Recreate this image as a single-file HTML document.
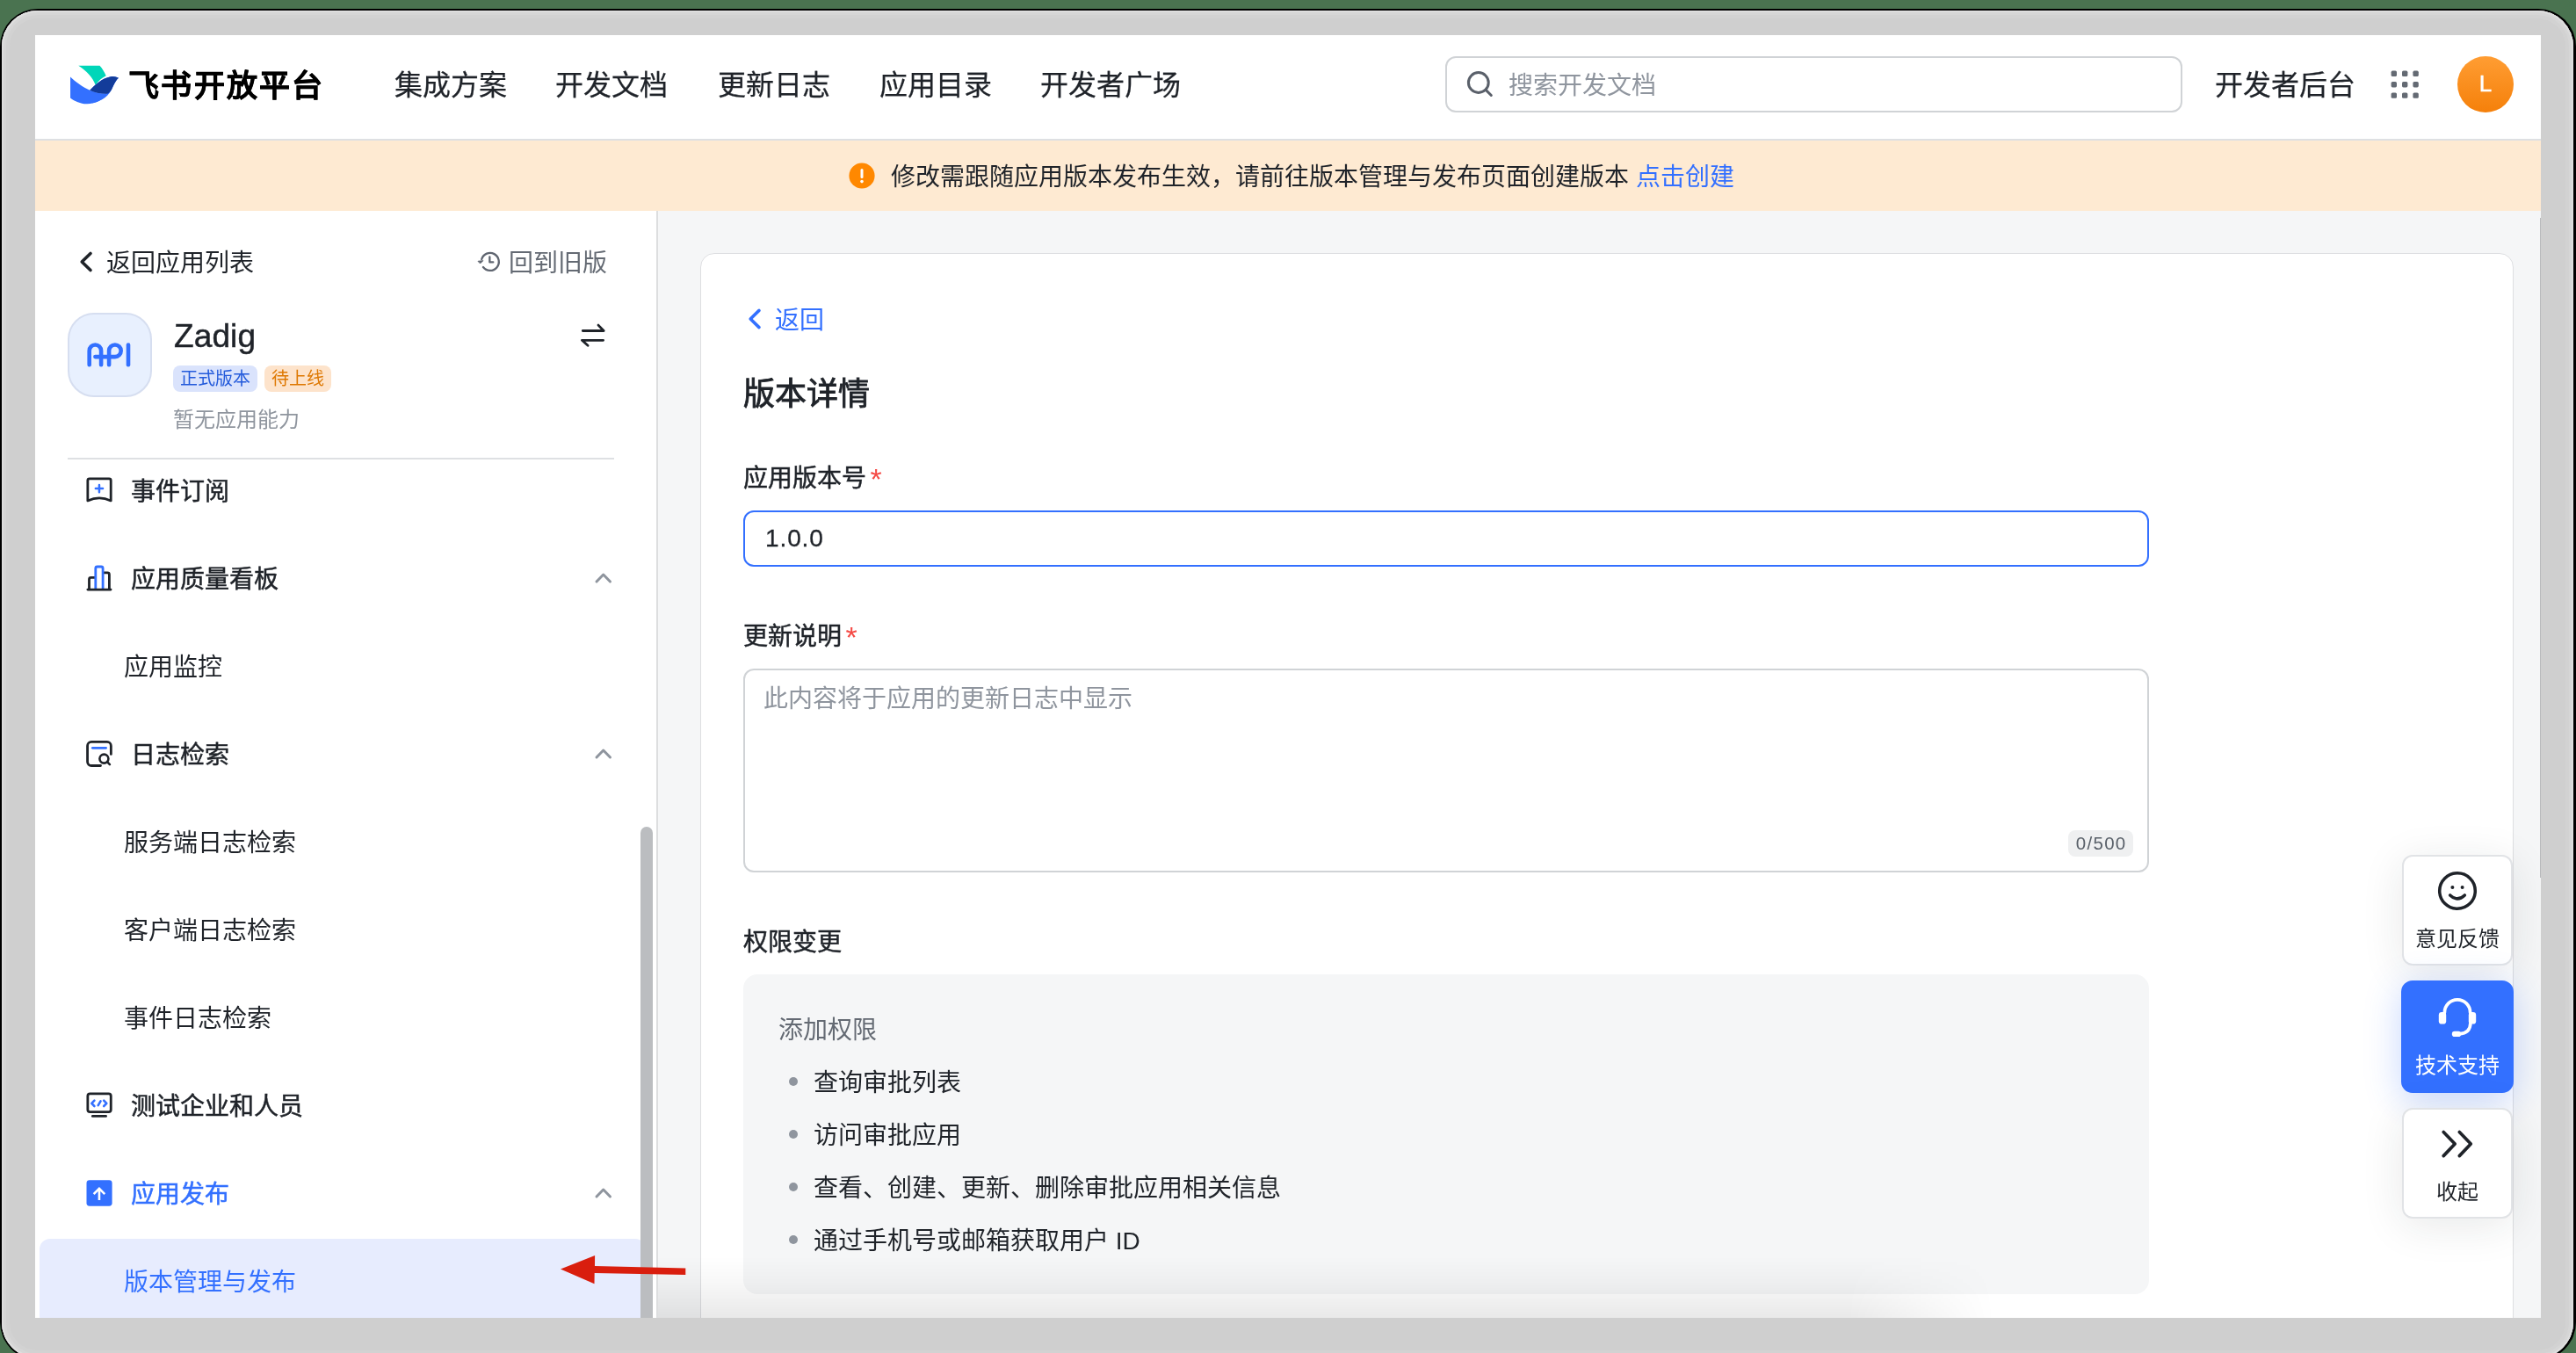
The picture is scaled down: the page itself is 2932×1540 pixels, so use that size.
<!DOCTYPE html>
<html lang="zh-CN">
<head>
<meta charset="utf-8">
<title>飞书开放平台 - 版本详情</title>
<style>
html,body{margin:0;padding:0}
body{width:2932px;height:1540px;overflow:hidden;background:#4a7350;font-family:"Liberation Sans",sans-serif;color:#1f2329;position:relative}
*{box-sizing:border-box}
.abs{position:absolute}
.t{position:absolute;white-space:nowrap;line-height:40px;height:40px;font-size:28px;color:#1f2329;text-align:justify;text-align-last:justify}
.m{-webkit-text-stroke:.5px currentColor}
svg{position:absolute;overflow:visible}

/* window frame */
.frame-edge{position:absolute;left:0;top:10px;width:2932px;height:1538px;border-radius:43px;background:#000}
.frame{position:absolute;left:1.5px;top:12px;width:2927px;height:1534px;border-radius:41px;background:#cfcfcf;box-shadow:inset 0 0 0 2px #dedede,inset 0 0 0 5px #d6d6d6,inset 0 0 0 9px #d2d2d2}
.app{position:absolute;left:40px;top:40px;width:2852px;height:1460px;overflow:hidden;background:#f5f6f7}
.page{position:absolute;left:-40px;top:-40px;width:2932px;height:1540px;will-change:transform}

/* header */
.header{position:absolute;left:40px;top:40px;width:2852px;height:120px;background:#fff;border-bottom:2px solid #dee0e3}
.logo-text{font-size:35px;font-weight:700;-webkit-text-stroke:.5px #000;color:#000;letter-spacing:2.3px;left:146px;top:78px}
.nav{font-size:32px;top:77px;-webkit-text-stroke:.25px currentColor}
.search{position:absolute;left:1645px;top:64px;width:839px;height:64px;border:2px solid #d0d3d6;border-radius:12px;background:#fff}
.avatar{position:absolute;left:2797px;top:64px;width:64px;height:64px;border-radius:50%;background:linear-gradient(180deg,#ff9d33 0%,#f5800a 100%);color:#fff;font-size:26px;line-height:62px;text-align:center;-webkit-text-stroke:.4px #fff}

/* banner */
.banner{position:absolute;left:40px;top:160px;width:2852px;height:80px;background:#feead2}

/* sidebar */
.sidebar{position:absolute;left:40px;top:240px;width:709px;height:1260px;background:#fff;border-right:2px solid #dddedf}
.gray{color:#646a73}
.blue{color:#3370ff}
.tag{position:absolute;height:30px;border-radius:8px;font-size:20px;line-height:30px;padding:0 8px;text-align:justify;text-align-last:justify;white-space:nowrap}
.sel{position:absolute;left:45px;top:1410px;width:690px;height:100px;border-radius:12px;background:#e7ecfe}
.scroll{position:absolute;left:729px;top:941px;width:14px;height:600px;border-radius:7px;background:#bbbdc0}

/* main card */
.card{position:absolute;left:797px;top:288px;width:2064px;height:1300px;background:#fff;border:1.5px solid #dddee1;border-radius:16px}
.input{position:absolute;left:846px;top:581px;width:1600px;height:64px;border:2px solid #3370ff;border-radius:12px;background:#fff}
.textarea{position:absolute;left:846px;top:761px;width:1600px;height:232px;border:2px solid #d0d3d6;border-radius:12px;background:#fff}
.count{position:absolute;left:2354px;top:945px;width:74px;height:30px;border-radius:8px;background:#eff0f1;color:#596069;font-size:20.5px;line-height:30px;text-align:center;letter-spacing:1.3px;padding-left:1.3px}
.perm{position:absolute;left:846px;top:1109px;width:1600px;height:364px;border-radius:16px;background:#f5f6f7}
.dot{position:absolute;left:898px;width:10px;height:10px;border-radius:50%;background:#8f959e}
.fade{position:absolute;left:749px;top:1430px;width:1521px;height:70px;background:linear-gradient(180deg,rgba(0,0,0,0) 0%,rgba(0,0,0,.03) 45%,rgba(0,0,0,.085) 100%);-webkit-mask-image:linear-gradient(90deg,#000 0%,#000 89%,transparent 100%);mask-image:linear-gradient(90deg,#000 0%,#000 89%,transparent 100%)}

/* floating help */
.fbtn{position:absolute;left:2734px;width:126px;height:126px;border-radius:12px;background:#fff;border:2px solid #e1e3e6;box-shadow:0 8px 48px rgba(31,35,41,.10)}
.fbtn.pri{left:2733px;width:128px;height:128px;border-radius:13px;background:#3370ff;border-color:#3370ff;box-shadow:0 8px 40px rgba(51,112,255,.28)}
.ft{position:absolute;width:128px;padding:0 16px;text-align:justify;text-align-last:justify;font-size:24px;line-height:32px;white-space:nowrap;color:#1f2329}
.pscroll{position:absolute;left:2891px;top:248px;width:1px;height:751px;background:#b9babc}
</style>
</head>
<body>
<div class="frame-edge"></div>
<div class="frame"></div>
<div class="app"><div class="page">

<!-- HEADER -->
<header class="header"></header>

<svg style="left:79px;top:74px" width="57" height="45" viewBox="79 74 57 45">
  <path d="M89.3,74.7 L113.5,74.7 C116.5,78 119,82 120.7,86.3 C116,88.5 112,92 108.8,96.9 C105.5,88 98.5,80.5 89.3,74.7 Z" fill="#00d6b9"/>
  <path d="M80.06,87.62 C86.4,93.56 94.32,99.5 102.24,102.8 C108.84,105.44 115.44,107.02 122.04,106.76 C118.08,113.36 107.52,118.64 98.28,118.24 C91.68,117.98 85.08,115.34 80.06,111.38 Z" fill="#3370ff"/>
  <path d="M102.24,102.8 C108,97 116,89 126,87.35 C129,86.8 132,87.2 135,88.67 C131,92 129,98 127,102 C122,112 112,116 104,117.6 C112,114 117,110 122,106.76 C115,107 108,105.4 102.24,102.8 Z" fill="#3370ff"/>
  <path d="M102.24,102.8 C108,97 116,89 126,87.35 C129,86.8 132,87.2 135,88.67 C131,92 129,98 127,102 C125.5,104.5 124,106 122,106.76 C115,107 108,105.4 102.24,102.8 Z" fill="#133c9a"/>
</svg>
<div class="t logo-text" style="width:223.81px">飞书开放平台</div>
<nav>
  <div class="t nav" style="width:128px;left:449px">集成方案</div>
  <div class="t nav" style="width:128px;left:632px">开发文档</div>
  <div class="t nav" style="width:128px;left:817px">更新日志</div>
  <div class="t nav" style="width:128px;left:1001px">应用目录</div>
  <div class="t nav" style="width:160px;left:1184px">开发者广场</div>
</nav>
<div class="search"></div>
<svg style="left:1668px;top:79px" width="32" height="32" viewBox="1668 79 32 32" fill="none" stroke="#5a606a" stroke-width="3" stroke-linecap="round">
  <circle cx="1682.8" cy="94" r="11.4"/><path d="M1691.2,102.4 L1697.3,108.5"/>
</svg>
<div class="t" style="width:168px;left:1717px;top:78px;color:#8f959e">搜索开发文档</div>
<div class="t nav m" style="width:160px;left:2521px">开发者后台</div>
<svg style="left:2721px;top:80px" width="32" height="32" viewBox="0 0 32 32" fill="#646a73">
  <rect x="0.6" y="0.6" width="6.4" height="6.4" rx="1.6"/><rect x="13" y="0.6" width="6.4" height="6.4" rx="1.6"/><rect x="25.4" y="0.6" width="6.4" height="6.4" rx="1.6"/>
  <rect x="0.6" y="13" width="6.4" height="6.4" rx="1.6"/><rect x="13" y="13" width="6.4" height="6.4" rx="1.6"/><rect x="25.4" y="13" width="6.4" height="6.4" rx="1.6"/>
  <rect x="0.6" y="25.4" width="6.4" height="6.4" rx="1.6"/><rect x="13" y="25.4" width="6.4" height="6.4" rx="1.6"/><rect x="25.4" y="25.4" width="6.4" height="6.4" rx="1.6"/>
</svg>
<div class="avatar">L</div>


<!-- BANNER -->
<div class="banner"></div>

<svg style="left:966px;top:185px" width="30" height="30" viewBox="0 0 30 30">
  <circle cx="15" cy="15" r="14.6" fill="#ff8800"/>
  <rect x="13.5" y="7" width="3" height="11" rx="1.5" fill="#fff"/><circle cx="15" cy="21.6" r="1.8" fill="#fff"/>
</svg>
<div class="t" style="width:959.78px;left:1014px;top:182px">修改需跟随应用版本发布生效，请前往版本管理与发布页面创建版本 <span class="blue">点击创建</span></div>


<!-- SIDEBAR -->
<aside class="sidebar"></aside>

<svg style="left:88px;top:284px" width="20" height="28" viewBox="88 284 20 28" fill="none" stroke="#1f2329" stroke-width="3.6" stroke-linecap="round" stroke-linejoin="round"><path d="M103,288.5 L93.2,298 L103,307.5"/></svg>
<div class="t" style="width:168px;left:121px;top:280px">返回应用列表</div>
<svg style="left:542px;top:284px" width="30" height="28" viewBox="542 284 30 28" fill="none" stroke="#5f6570" stroke-width="2.3" stroke-linecap="round" stroke-linejoin="round">
  <path d="M548.24,294.98 A10,10 0 1 1 549.92,304.06"/><path d="M544.4,297.3 L549.8,296.7 L546.8,299.7 Z" fill="#5f6570" stroke-width="1"/><path d="M557.35,292.4 V298.4 H561.3" stroke-width="2.3"/>
</svg>
<div class="t gray" style="width:112px;left:579px;top:280px">回到旧版</div>

<div class="abs" style="left:77px;top:356px;width:96px;height:96px;border-radius:30px;background:#e8f0fe;border:2px solid #d6def0"></div>
<svg style="left:96px;top:386px" width="56" height="36" viewBox="96 386 56 36" fill="none" stroke="#3370ff" stroke-width="4.6" stroke-linecap="round" stroke-linejoin="round">
  <path d="M101.7,415.2 V399.2 a6.7,6.7 0 0 1 13.4,0 V415.2"/>
  <path d="M124.1,415.2 V399.3 a6.8,6.8 0 1 1 6.8,6.8 H108.4"/>
  <path d="M146,392.5 V415.2"/>
</svg>
<div class="t" style="left:198px;top:359px;font-size:37px;line-height:48px;height:48px;letter-spacing:.1px;-webkit-text-stroke:.5px #1f2329">Zadig</div>
<svg style="left:658px;top:367px" width="34" height="32" viewBox="658 367 34 32" fill="none" stroke="#1f2329" stroke-width="2.8" stroke-linecap="round" stroke-linejoin="round">
  <path d="M663.3,376.5 H687.2 L681,370.1"/><path d="M686.6,387.3 H662.4 L669.1,393.3"/>
</svg>
<div class="tag" style="left:197px;top:416px;width:96px;background:#dae3fc;color:#245bdb">正式版本</div>
<div class="tag" style="left:301px;top:416px;width:76px;background:#fde3cb;color:#de7802">待上线</div>
<div class="t" style="width:144px;left:197px;top:458px;font-size:24px;color:#8f959e">暂无应用能力</div>
<div class="abs" style="left:77px;top:521px;width:622px;height:2px;background:#dee0e3"></div>

<!-- menu -->
<svg style="left:96px;top:541px" width="34" height="34" viewBox="96 541 34 34" fill="none" stroke="#1f2329" stroke-width="2.8" stroke-linejoin="round" stroke-linecap="round">
  <path d="M99.85,569.9 V546.85 a2,2 0 0 1 2,-2 H124.2 a2,2 0 0 1 2,2 V569.9 Q113,563.9 99.85,569.9 Z"/>
  <path d="M108.85,556.1 H117.05 M112.95,552 V560.2" stroke="#3370ff" stroke-width="2.5"/>
</svg>
<div class="t m" style="width:112px;left:149px;top:540px">事件订阅</div>

<svg style="left:96px;top:641px" width="34" height="34" viewBox="96 641 34 34" fill="none" stroke="#1f2329" stroke-width="2.8" stroke-linejoin="round" stroke-linecap="round">
  <path d="M101.5,670 V659.45 a2,2 0 0 1 2,-2 H108"/>
  <path d="M118,651.96 H122.4 a2,2 0 0 1 2,2 V670"/>
  <path d="M108.8,670 V647 a2,2 0 0 1 2,-2 h4.3 a2,2 0 0 1 2,2 V670" stroke="#3370ff"/>
  <path d="M99.85,671.1 H126.05"/>
</svg>
<div class="t m" style="width:168px;left:149px;top:640px">应用质量看板</div>
<svg style="left:676px;top:650px" width="22" height="16" viewBox="0 0 22 16" fill="none" stroke="#8f959e" stroke-width="3" stroke-linecap="round" stroke-linejoin="round"><path d="M3,12 L10.75,4 L18.5,12"/></svg>
<div class="t" style="width:112px;left:141px;top:740px">应用监控</div>

<svg style="left:96px;top:841px" width="34" height="34" viewBox="96 841 34 34" fill="none" stroke="#1f2329" stroke-width="2.8" stroke-linejoin="round" stroke-linecap="round">
  <path d="M114.5,871.5 H104.05 a4.5,4.5 0 0 1 -4.5,-4.5 V848.9 a4.5,4.5 0 0 1 4.5,-4.5 H121.85 a4.5,4.5 0 0 1 4.5,4.5 V858.4"/>
  <path d="M105.3,851.3 H120.6" stroke="#3370ff" stroke-width="2.7"/>
  <circle cx="118.4" cy="863.6" r="5" stroke-width="2.6"/><path d="M122,867.2 L124.9,870.1" stroke-width="2.6"/>
</svg>
<div class="t m" style="width:112px;left:149px;top:840px">日志检索</div>
<svg style="left:676px;top:850px" width="22" height="16" viewBox="0 0 22 16" fill="none" stroke="#8f959e" stroke-width="3" stroke-linecap="round" stroke-linejoin="round"><path d="M3,12 L10.75,4 L18.5,12"/></svg>
<div class="t" style="width:196px;left:141px;top:940px">服务端日志检索</div>
<div class="t" style="width:196px;left:141px;top:1040px">客户端日志检索</div>
<div class="t" style="width:168px;left:141px;top:1140px">事件日志检索</div>

<svg style="left:96px;top:1241px" width="34" height="34" viewBox="96 1241 34 34" fill="none" stroke="#1f2329" stroke-width="2.8" stroke-linejoin="round" stroke-linecap="round">
  <rect x="99.85" y="1244.85" width="26.4" height="20.7" rx="2.6"/>
  <path d="M105.35,1270.4 H120.55"/>
  <path d="M107.4,1252.6 L104.3,1255.8 L107.4,1259 M118.2,1252.6 L121.3,1255.8 L118.2,1259 M114.5,1253.4 L111.7,1258.2" stroke="#3370ff" stroke-width="2.6"/>
</svg>
<div class="t m" style="width:196px;left:149px;top:1240px">测试企业和人员</div>

<svg style="left:98px;top:1343px" width="30" height="30" viewBox="98 1343 30 30"><rect x="98.5" y="1343.3" width="29.1" height="29.4" rx="3.4" fill="#3370ff"/><path d="M112.95,1364.6 V1353.2 M107.6,1358.2 L112.95,1352.9 L118.3,1358.2" fill="none" stroke="#fff" stroke-width="2.6" stroke-linecap="square" stroke-linejoin="miter"/></svg>
<div class="t m blue" style="width:112px;left:149px;top:1340px">应用发布</div>
<svg style="left:676px;top:1350px" width="22" height="16" viewBox="0 0 22 16" fill="none" stroke="#8f959e" stroke-width="3" stroke-linecap="round" stroke-linejoin="round"><path d="M3,12 L10.75,4 L18.5,12"/></svg>
<div class="sel"></div>
<div class="t blue" style="width:196px;left:141px;top:1440px">版本管理与发布</div>
<div class="scroll"></div>


<!-- MAIN -->
<main class="card"></main>

<svg style="left:848px;top:349px" width="22" height="28" viewBox="848 349 22 28" fill="none" stroke="#3370ff" stroke-width="3.6" stroke-linecap="round" stroke-linejoin="round"><path d="M864,353.4 L854.2,363 L864,372.6"/></svg>
<div class="t blue" style="width:56px;left:882px;top:345px">返回</div>
<h1 class="t" style="width:144px;left:846px;top:425px;margin:0;font-size:36px;font-weight:400;line-height:48px;height:48px;-webkit-text-stroke:.9px #1f2329">版本详情</h1>

<div class="t m" style="width:140px;left:846px;top:525px">应用版本号</div>
<div class="t" style="left:990.5px;top:525px;color:#f54a45;font-size:34px">*</div>
<div class="input"></div>
<div class="t" style="left:871px;top:593px;letter-spacing:.9px;-webkit-text-stroke:.3px #1f2329">1.0.0</div>

<div class="t m" style="width:112px;left:846px;top:705px">更新说明</div>
<div class="t" style="left:962.5px;top:705px;color:#f54a45;font-size:34px">*</div>
<div class="textarea"></div>
<div class="t" style="width:420px;left:869px;top:776px;color:#8f959e">此内容将于应用的更新日志中显示</div>
<div class="count">0/500</div>

<div class="t m" style="width:112px;left:846px;top:1053px">权限变更</div>
<section class="perm"></section>
<div class="t gray" style="width:112px;left:886px;top:1153px">添加权限</div>
<div class="dot" style="top:1226px"></div><div class="t" style="width:168px;left:926px;top:1213px">查询审批列表</div>
<div class="dot" style="top:1286px"></div><div class="t" style="width:168px;left:926px;top:1273px">访问审批应用</div>
<div class="dot" style="top:1346px"></div><div class="t" style="width:532px;left:926px;top:1333px">查看、创建、更新、删除审批应用相关信息</div>
<div class="dot" style="top:1406px"></div><div class="t" style="width:371.78px;left:926px;top:1393px">通过手机号或邮箱获取用户 ID</div>
<div class="fade"></div>



<div class="abs" style="left:2861px;top:240px;width:31px;height:1260px;background:#f5f6f7"></div>
<div class="pscroll"></div>
<div class="fbtn" style="top:973px"></div>
<svg style="left:2773.2px;top:989.7px" width="48" height="48" viewBox="-24 -24 48 48" fill="none" stroke="#1f2329" stroke-width="3.5" stroke-linecap="round"><circle cx="0" cy="0" r="20.3"/><path d="M-8.3,4.9 Q0,13 8.3,4.9"/><circle cx="-5.6" cy="-4.1" r="2" fill="#1f2329" stroke="none"/><circle cx="5.6" cy="-4.1" r="2" fill="#1f2329" stroke="none"/></svg>
<div class="ft" style="left:2733px;top:1053px">意见反馈</div>
<div class="fbtn pri" style="top:1116px"></div>
<svg style="left:2773.2px;top:1129.9px" width="48" height="52" viewBox="0 0 48 52" fill="none" stroke="#fff" stroke-width="3.7" stroke-linecap="round" stroke-linejoin="round"><path d="M9.4,22.4 A14.6,14.6 0 0 1 38.6,22.4"/><rect x="2.8" y="22" width="8.4" height="13.6" rx="3.4" fill="#fff" stroke="none"/><rect x="36.8" y="22" width="8.4" height="13.6" rx="3.4" fill="#fff" stroke="none"/><path d="M39,34 Q38.6,46.4 26,46.9"/><rect x="17.8" y="43.8" width="10.4" height="6.2" rx="3.1" fill="#fff" stroke="none"/></svg>
<div class="ft" style="left:2733px;top:1196.5px;color:#fff">技术支持</div>
<div class="fbtn" style="top:1261px"></div>
<svg style="left:2773px;top:1278px" width="48" height="48" viewBox="2773 1278 48 48" fill="none" stroke="#1f2329" stroke-width="3.7" stroke-linecap="round" stroke-linejoin="round"><path d="M2781.2,1288.5 L2794.2,1302 L2781.2,1315.6 M2799.3,1288.5 L2812.3,1302 L2799.3,1315.6"/></svg>
<div class="ft" style="left:2733px;top:1340.5px;padding:0 40px">收起</div>
<svg style="left:630px;top:1420px" width="160" height="50" viewBox="630 1420 160 50"><path d="M638,1444.4 L677.1,1428.9 L677,1440.9 L780.3,1443.5 L780.3,1450.9 L676.7,1449.1 L676.5,1461.2 Z" fill="#d91e0e"/></svg>


</div></div>
</body>
</html>
